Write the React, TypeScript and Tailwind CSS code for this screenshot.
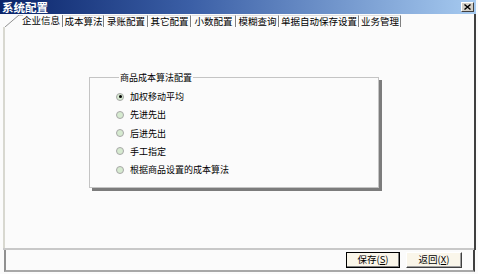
const tabs = [
  { label: "企业信息", w: 58 },
  { label: "成本算法", w: 41 },
  { label: "录账配置", w: 44 },
  { label: "其它配置", w: 43 },
  { label: "小数配置", w: 45 },
  { label: "模糊查询", w: 43 },
  { label: "单据自动保存设置", w: 80 },
  { label: "业务管理", w: 42 },
];

const options = ["加权移动平均", "先进先出", "后进先出", "手工指定", "根据商品设置的成本算法"];

const Radio = ({ checked }: { checked?: boolean }) => (
  <span className="w-[8px] h-[8px] rounded-full border border-[#a8a8a8] bg-[#d6ead0] flex items-center justify-center">
    {checked && <span className="w-[3px] h-[3px] rounded-full bg-black" />}
  </span>
);

const Btn = ({ text, hot, def }: { text: string; hot: string; def?: boolean }) => (
  <button
    className={`h-[16px] flex items-center justify-center text-[9.5px] leading-none text-black bg-[#faf6ea] ${
      def ? "w-[54px] border border-black shadow-[inset_-1px_-1px_0_#808080]" : "w-[56px] border border-t-white border-l-white border-r-[#404040] border-b-[#404040] shadow-[inset_-1px_-1px_0_#a0a0a0]"
    }`}
  >
    {text}(<span className="underline">{hot}</span>)
  </button>
);

export default function App() {
  return (
    <div className="w-[478px] h-[274px] overflow-hidden font-['Noto_Sans_CJK_SC',sans-serif] flex flex-col bg-[#fbfbfb]">
      {/* 标题栏 */}
      <div className="relative bg-blue-800 h-[14px] w-[476px] flex flex-row items-center justify-between px-[2px]">
        <svg className="absolute left-0 top-0" width="476" height="14" viewBox="0 0 476 14">
          <defs>
            <linearGradient id="tb" x1="0" y1="0" x2="1" y2="0">
              <stop offset="0" stopColor="#0a246a" />
              <stop offset="0.4" stopColor="#3b5fa6" />
              <stop offset="1" stopColor="#a6caf0" />
            </linearGradient>
          </defs>
          <rect width="476" height="14" fill="url(#tb)" />
        </svg>
        <b className="relative text-white text-[11.5px] leading-[14px]">系统配置</b>
        <i className="relative w-[13px] h-[10px] bg-[#d4d0c8] border border-t-white border-l-white border-r-[#404040] border-b-[#404040] flex items-center justify-center">
          <svg width="7" height="6" viewBox="0 0 7 6">
            <path d="M0.5 0.5 L6.5 5.5 M6.5 0.5 L0.5 5.5" stroke="#000" strokeWidth="1.4" />
          </svg>
        </i>
      </div>

      {/* 选项卡 */}
      <div className="h-[13px] flex items-end pl-[5px] bg-[#fbfbfb] border-r-2 border-r-[#404040] mr-[2px]">
        {tabs.map((t, i) => (
          <div
            key={t.label}
            style={{ width: t.w }}
            className={`h-[12px] flex items-center text-[9.5px] leading-none text-black border-r border-r-[#808080] ${
              i === 0 ? "justify-end pr-[2px] relative" : "justify-center border-l border-l-white border-t border-t-[#e0e0e0]"
            }`}
          >
            {i === 0 && (
              <svg className="absolute left-0 top-0" width="18" height="12" viewBox="0 0 18 12">
                <path d="M0 12 L14 0 L18 0" stroke="#909090" fill="none" />
              </svg>
            )}
            {t.label}
          </div>
        ))}
      </div>

      {/* 内容区 */}
      <div className="h-[221px] bg-[#fbfbfb] border-l-2 border-l-[#d8d8d0] border-r-2 border-r-[#404040] ml-[3px] mr-[2px] pt-[46px] pl-[84px]">
        <fieldset className="w-[290px] h-[115px] border border-[#c4c4c4] shadow-[3px_3px_0_#7c7c7c] pl-[26px]">
          <legend className="ml-[3px] px-[1px] text-[9px] leading-none text-black">商品成本算法配置</legend>
          <div className="flex flex-col gap-[9.3px] pt-[10px]">
            {options.map((o, i) => (
              <div key={o} className="flex items-center gap-[6px] h-[9px]">
                <Radio checked={i === 0} />
                <span className="text-[9px] leading-none text-black">{o}</span>
              </div>
            ))}
          </div>
        </fieldset>
      </div>

      {/* 分隔线 */}
      <div className="h-[2px] bg-[#c8c8c8] ml-[3px] mr-[2px] border-r-2 border-r-[#404040]" />

      {/* 底部按钮 */}
      <div className="h-[22px] bg-[#fbfbfb] border-l-2 border-l-[#909090] border-r-2 border-r-[#404040] border-b-2 border-b-[#a8a8a8] ml-[4px] mr-[3px] flex items-center justify-end gap-[6px] pr-[11px]">
        <Btn text="保存" hot="S" def />
        <Btn text="返回" hot="X" />
      </div>
    </div>
  );
}
